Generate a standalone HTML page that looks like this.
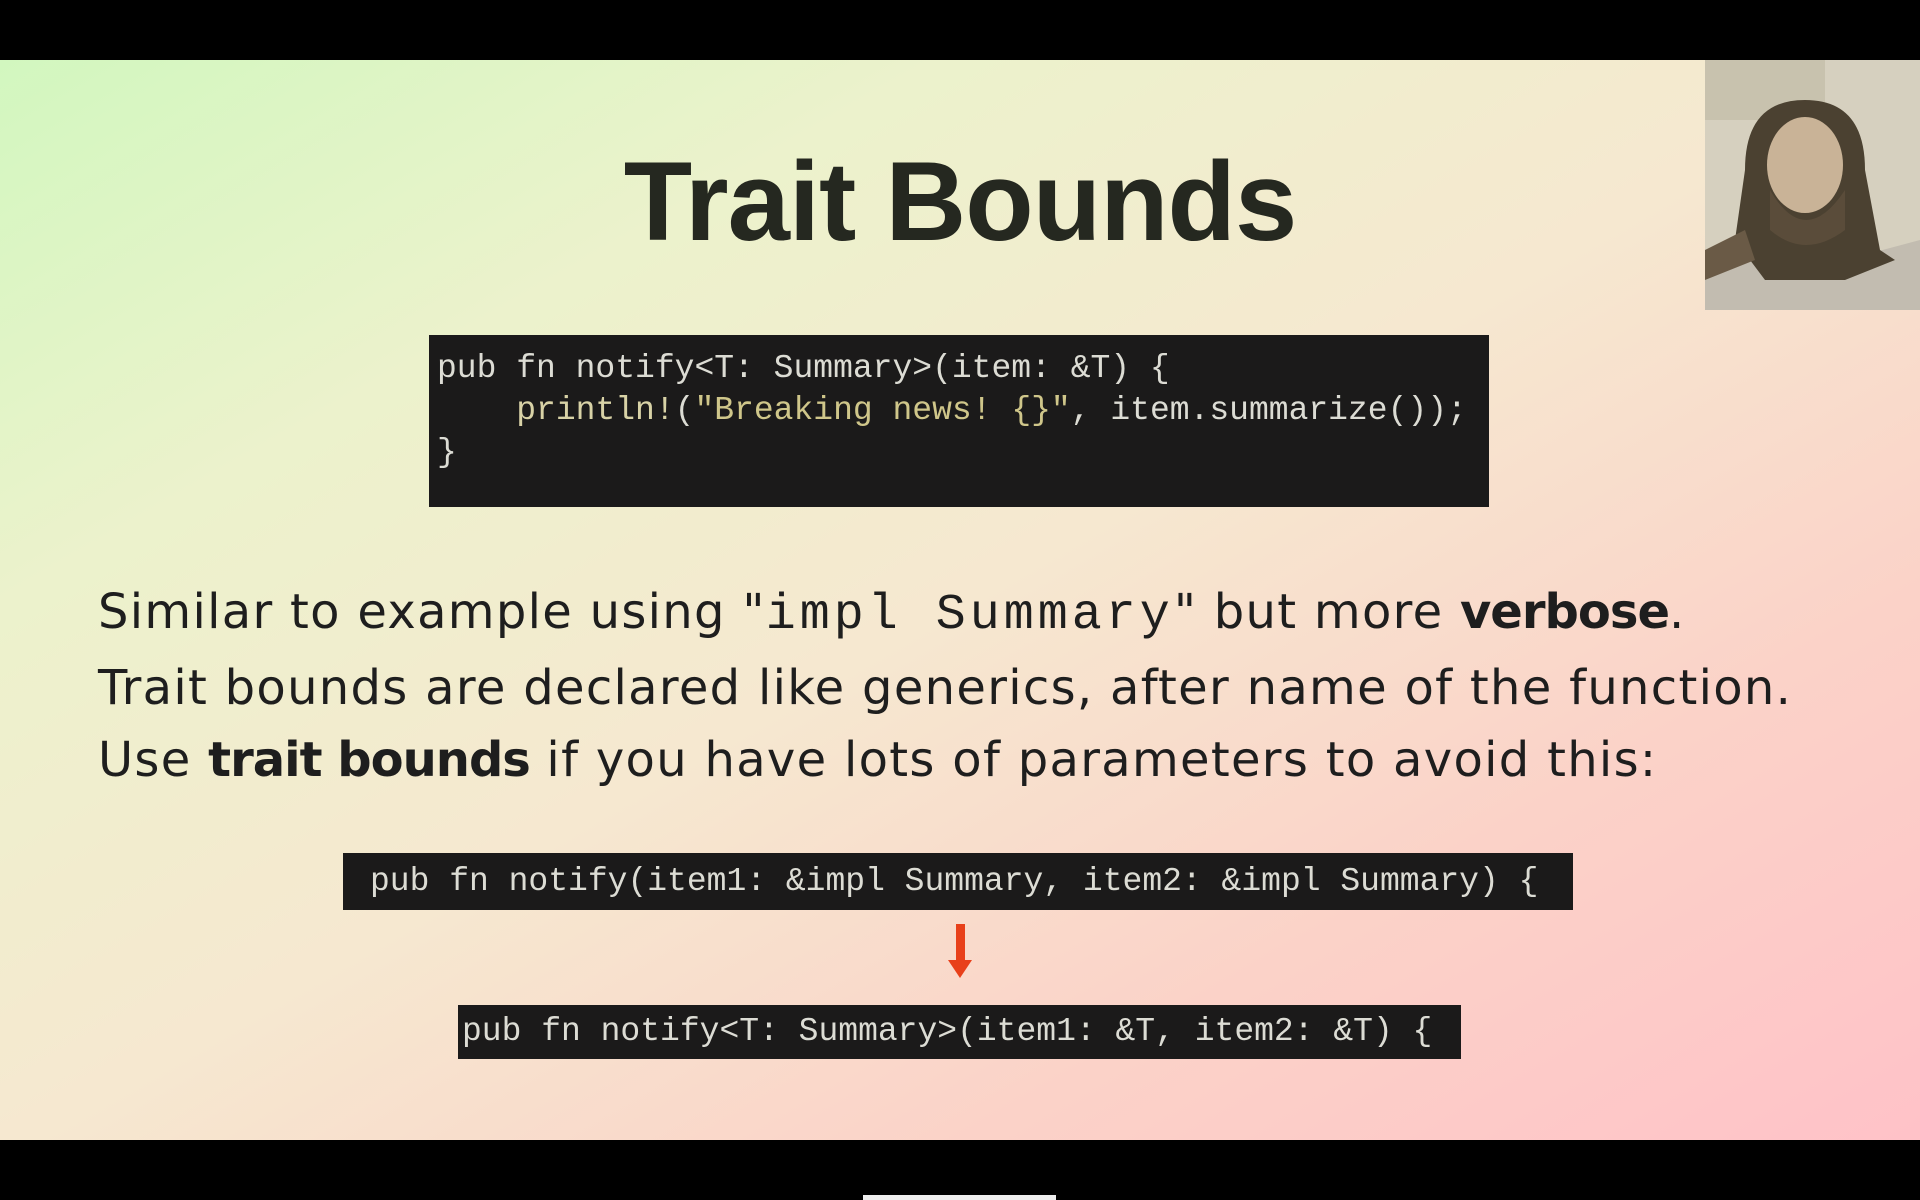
<!DOCTYPE html>
<html><head><meta charset="utf-8"><style>
html,body{margin:0;padding:0;width:1920px;height:1200px;overflow:hidden;background:#000;}
#slide{position:absolute;left:0;top:60px;width:1920px;height:1080px;
background:linear-gradient(150deg,#d2f7bf 0%,#ecf2cc 25%,#f6e8d0 50%,#fbd2c8 75%,#ffc2c8 100%);}
.t{position:absolute;font-family:"Liberation Sans",sans-serif;color:#1c1c1c;}
.t b{letter-spacing:-1px;}
.code{position:absolute;background:#1b1a1a;font-family:"Liberation Mono",monospace;color:#dcdcd4;white-space:pre;}
</style></head><body>
<div id="slide">
<div class="t" style="left:0;width:1920px;text-align:center;top:77px;font-size:112px;font-weight:bold;color:#252820;letter-spacing:-1px;">Trait Bounds</div>
<div class="code" style="left:429px;top:275px;width:1060px;height:172px;font-size:33px;line-height:42px;">
<div style="position:absolute;left:8px;top:13px;">pub fn notify&lt;T: Summary&gt;(item: &amp;T) {
    <span style="color:#d8d2a6">println!</span>(<span style="color:#cfc68a">"Breaking news! {}"</span>, item.summarize());
}</div></div>
<div class="t" style="left:98px;top:516px;font-size:48px;line-height:72px;color:#1e1e1e;font-family:'DejaVu Sans',sans-serif;letter-spacing:1.3px;white-space:nowrap;">Similar to example using "<span style="font-family:'Liberation Mono',monospace;font-size:50px;letter-spacing:4px;">impl Summary</span>" but more <b>verbose</b>.<br>Trait bounds are declared like generics, after name of the function.<br>Use <b>trait bounds</b> if you have lots of parameters to avoid this:</div>
<div class="code" style="left:343px;top:793px;width:1230px;height:57px;font-size:33px;line-height:57px;"><span style="padding-left:27px">pub fn notify(item1: &amp;impl Summary, item2: &amp;impl Summary) {</span></div>
<svg style="position:absolute;left:945px;top:862px" width="30" height="60"><rect x="11" y="2" width="9" height="40" fill="#e8401a"/><polygon points="3,38 27,38 15,56" fill="#e8401a"/></svg>
<div class="code" style="left:458px;top:945px;width:1003px;height:54px;font-size:33px;line-height:54px;"><span style="padding-left:4px">pub fn notify&lt;T: Summary&gt;(item1: &amp;T, item2: &amp;T) {</span></div>
<svg style="position:absolute;left:1705px;top:0" width="215" height="250">
<rect width="215" height="250" fill="#d6d0bf"/>
<rect x="0" y="0" width="120" height="60" fill="#c8c2ae"/>
<path d="M0,200 L40,175 L80,200 L140,200 L215,180 L215,250 L0,250Z" fill="#c2bcb0"/>
<path d="M40,110 Q40,40 100,40 Q160,40 160,110 L175,190 L190,200 L140,220 L60,220 L30,180 Z" fill="#4b4131"/>
<ellipse cx="100" cy="105" rx="38" ry="48" fill="#c9b397"/>
<path d="M65,130 Q100,190 140,130 L140,170 Q100,200 65,170Z" fill="#5a4c3a"/>
<path d="M0,190 L40,170 L50,200 L0,220Z" fill="#6a5a46"/>
</svg>
</div>
<div style="position:absolute;left:863px;top:1195px;width:193px;height:5px;background:#eee;"></div>
</body></html>
